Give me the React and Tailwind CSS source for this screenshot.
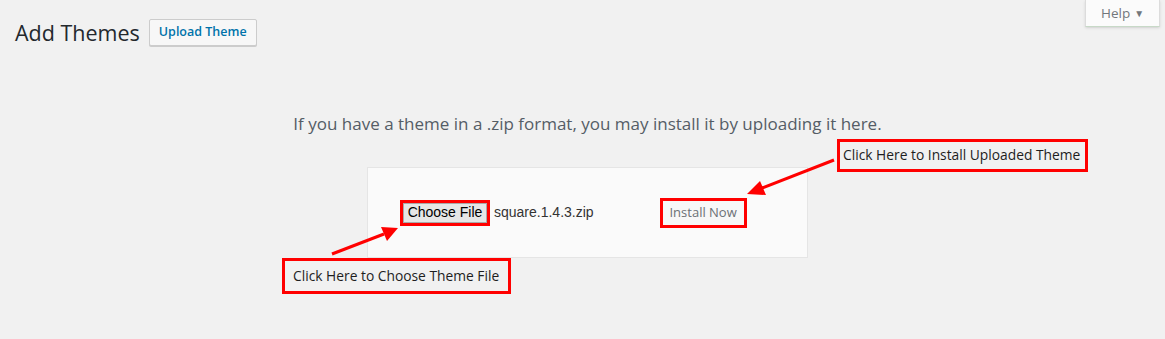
const sans = { fontFamily: '"Open Sans", "Noto Sans", sans-serif' }
const arial = { fontFamily: '"Liberation Sans", Arial, sans-serif' }

function Callout({ className, children }) {
  return (
    <div
      className={`absolute flex items-center border-[3px] border-[#ff0000] bg-[#f1f1f1] text-[13.8px] text-[#1e1e1e] ${className}`}
      style={sans}
    >
      {children}
    </div>
  )
}

function Arrows() {
  return (
    <svg className="pointer-events-none absolute left-0 top-0" width="1165" height="339">
      <line x1="834" y1="160" x2="762" y2="188" stroke="#ff0000" strokeWidth="3" />
      <polygon points="747,194 760,181 766,195" fill="#ff0000" />
      <line x1="332" y1="254" x2="384" y2="234" stroke="#ff0000" strokeWidth="3" />
      <polygon points="398,228 381,227 387,241" fill="#ff0000" />
    </svg>
  )
}

export default function App() {
  return (
    <div className="relative h-[339px] w-[1165px] overflow-hidden bg-[#f1f1f1]" style={sans}>
      <div className="flex justify-end pr-[5px]">
        <div className="flex h-[27px] w-[75px] items-center justify-center gap-1 border border-t-0 border-[#dcdcdc] border-b-[#c7d9c7] bg-[#fbfbfb] text-[13.5px] text-[#72777c] shadow-sm">
          Help
          <span className="text-[10px] text-[#72777c]">▼</span>
        </div>
      </div>

      <div className="-mt-[27px] pl-[15px] pr-[5px]">
        <div className="flex items-center gap-[9px] pt-[19px]">
          <h1 className="text-[21.5px] font-normal leading-[27px] text-[#23282d]">Add Themes</h1>
          <button className="h-[27px] rounded-[2px] border border-[#cccccc] bg-[#f7f7f7] px-[9px] text-[12.5px] font-semibold text-[#0073aa] shadow-[0_1px_0_#ccc]">
            Upload Theme
          </button>
        </div>

        <p className="mt-[66px] text-center text-[17px] leading-[24px] text-[#555d66]">
          If you have a theme in a .zip format, you may install it by uploading it here.
        </p>

        <div className="mx-auto mt-[31px] flex h-[91px] w-[441px] items-center border border-[#e5e5e5] bg-[#fafafa] pl-[32px]">
          <div className="border-[3px] border-[#ff0000]">
            <div
              className="flex h-[20px] w-[84px] items-center justify-center border border-[#a9a9a9] bg-[#e6e6e6] text-[14px] text-black"
              style={arial}
            >
              Choose File
            </div>
          </div>
          <span className="ml-[4px] text-[14px] text-[#333]" style={arial}>
            square.1.4.3.zip
          </span>
          <div className="ml-[66px] flex h-[30px] w-[87px] items-center justify-center border-[3px] border-[#ff0000] bg-[#f7f7f7] text-[13px] text-[#6b7075]">
            Install Now
          </div>
        </div>
      </div>

      <Arrows />

      <Callout className="left-[837px] top-[139px] h-[33px] w-[251px] pl-[3px]">
        Click Here to Install Uploaded Theme
      </Callout>
      <Callout className="left-[282px] top-[258px] h-[36px] w-[229px] pl-[8px]">
        Click Here to Choose Theme File
      </Callout>
    </div>
  )
}
